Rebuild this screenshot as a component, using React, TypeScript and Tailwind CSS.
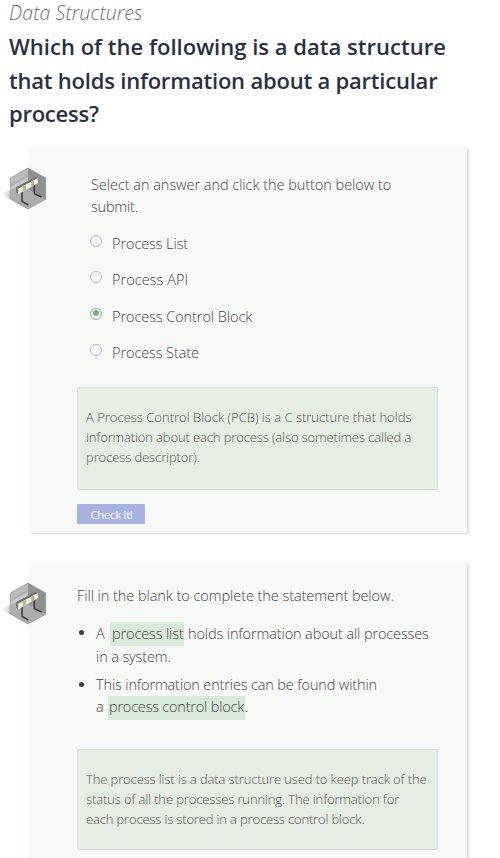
import type { ReactNode } from "react";

function BarrierIcon() {
  return (
    <svg viewBox="0 0 180 180" className="absolute -left-[29px] top-[13px] h-[60px] w-[60px]" aria-hidden="true">
      <defs>
        <linearGradient id="cast" gradientUnits="userSpaceOnUse" x1="2" y1="100" x2="50" y2="110">
          <stop offset="0" stopColor="#f4f4f4" stopOpacity="0.3" />
          <stop offset="0.6" stopColor="#c6c6c6" />
          <stop offset="1" stopColor="#a8a8a8" />
        </linearGradient>
      </defs>
      <path d="M2 102 L31 90 L84 120 V146 L60 134 Z" fill="url(#cast)" />
      <path d="M84 24 L137 54 V118 L84 147 L31 116 V54 Z" fill="#ababab" />
      <path d="M84 24 L137 54 V118 L84 88 Z" fill="#919191" />
      <path d="M84 24 V88 L31 116 V54 Z" fill="#b0b0b0" />
      <path d="M31 56 L84 27 V44 L31 73 Z" fill="#bbbbbb" />
      <path d="M31 81 L84 52 V62 L31 91 Z" fill="#cccccc" />
      <path d="M31 116 L84 88 L137 118 L84 147 Z" fill="#acacac" />
      <path d="M84 24 L137 54 V118 L84 147 L31 116 V54 Z" fill="none" stroke="#9c9c9c" strokeWidth="2" />
      <path d="M66 94 V124 L85 135" fill="none" stroke="#393939" strokeWidth="4.5" />
      <path d="M103 72 V101 L125 111" fill="none" stroke="#393939" strokeWidth="4.5" />
      <path d="M48 82 L55 86 V102 L48 98 Z" fill="#777777" />
      <path d="M48 82 L106 51 L113 55 L55 86 Z" fill="#707070" />
      <path d="M55 86 L113 54 V70 L55 103 Z" fill="#f5f5f2" />
      <path d="M68 79 L78 74 V90 L68 95 Z" fill="#b5b97c" />
      <path d="M94 65 L103 60 V76 L94 81 Z" fill="#b5b97c" />
      <path d="M61 83 V99 M86 70 V85" stroke="#d4d4cf" strokeWidth="2" />
    </svg>
  );
}

function Card({ className, children }: { className: string; children: ReactNode }) {
  return (
    <section
      className={`relative ml-[29px] w-[438px] rounded-[3px] bg-[#f7f9f7] pl-[48px] pr-[29px] shadow-[2px_1px_3px_rgba(0,0,0,0.16)] ${className}`}
    >
      <BarrierIcon />
      {children}
    </section>
  );
}

function Explanation({ className, children }: { className: string; children: ReactNode }) {
  return (
    <div
      className={`rounded-[2px] border border-[#d3dcd2] bg-[#e6eee4] pl-2 text-[13px] leading-5 text-[#555551] ${className}`}
    >
      {children}
    </div>
  );
}

function Line({ className = "", children }: { className?: string; children: ReactNode }) {
  return <span className={`block whitespace-nowrap ${className}`}>{children}</span>;
}

function Blank({ className, children }: { className: string; children: ReactNode }) {
  return <span className={`inline-block h-6 rounded-[1px] bg-[#d8ead8] ${className}`}>{children}</span>;
}

const options = [
  { label: "Process List", tracking: "tracking-[-0.08px]" },
  { label: "Process API", tracking: "tracking-[0.05px]" },
  { label: "Process Control Block", tracking: "tracking-[-0.07px]", checked: true },
  { label: "Process State", tracking: "tracking-[-0.08px]" },
];

export default function App() {
  return (
    <main className="h-[858px] w-[500px] overflow-hidden bg-white font-['Open_Sans',sans-serif] text-[14.5px] font-light leading-[22px] text-[#484548]">
      <p className="pl-[9px] text-[19.5px] italic leading-[25px] tracking-[0.12px] text-[#707070]">Data Structures</p>
      <h1 className="mt-[5px] pl-[9px] text-[22px] font-semibold leading-[33.5px] text-[#293044]">
        <Line className="tracking-[0.02px]">Which of the following is a data structure</Line>
        <Line className="tracking-[-0.21px]">that holds information about a particular</Line>
        <Line className="tracking-[-0.25px]">process?</Line>
      </h1>

      <Card className="mt-[16.5px] h-[386px] pt-[27px]">
        <p className="pl-[14px]">
          <Line className="tracking-[-0.04px]">Select an answer and click the button below to</Line>
          <Line className="tracking-[-0.2px]">submit.</Line>
        </p>
        <div className="mt-[8px] pl-[13px]">
          {options.map((o) => (
            <label key={o.label} className="flex h-[36.25px] items-center gap-[10px]">
              <span
                className={`mb-[6px] flex h-3 w-3 items-center justify-center rounded-full border ${
                  o.checked ? "border-[#83b586]" : "border-[#b5b5cb]"
                }`}
              >
                {o.checked && <span className="mb-px mr-px h-[6px] w-[6px] rounded-full bg-[#7db080]" />}
              </span>
              <span className={o.tracking}>{o.label}</span>
            </label>
          ))}
        </div>
        <Explanation className="mt-[16px] h-[103px] pt-[19px]">
          <Line>A Process Control Block (PCB) is a C structure that holds</Line>
          <Line className="tracking-[-0.12px]">information about each process (also sometimes called a</Line>
          <Line className="tracking-[-0.1px]">process descriptor).</Line>
        </Explanation>
        <button className="mt-[14px] block h-5 w-[68px] rounded-[1px] bg-[#a6b3e0] pl-px pt-[2px] text-[11.5px] font-normal leading-[18px] tracking-[-0.4px] text-white">
          Check It!
        </button>
      </Card>

      <Card className="mt-[29px] h-[320px] pt-[22.5px]">
        <Line className="tracking-[-0.06px]">Fill in the blank to complete the statement below.</Line>
        <ul className="mt-[15px]">
          <li className="flex gap-[12px] leading-[23px]">
            <span className="ml-[2px] mt-[8px] h-[5px] w-[5px] shrink-0 rounded-full bg-[#3c3a3c]" />
            <span>
              <Line className="flex h-[23px] tracking-[-0.12px]">
                <span className="w-[14px]">A</span>
                <Blank className="w-[74px] pl-[2px]">process list</Blank>
                <span className="pl-[4px]">holds information about all processes</span>
              </Line>
              <Line className="tracking-[-0.12px]">in a system.</Line>
            </span>
          </li>
          <li className="mt-[6px] flex gap-[12px]">
            <span className="ml-[2px] mt-[8px] h-[5px] w-[5px] shrink-0 rounded-full bg-[#3c3a3c]" />
            <span>
              <Line className="tracking-[-0.14px]">This information entries can be found within</Line>
              <Line className="flex">
                <span className="w-[12px]">a</span>
                <Blank className="w-[137px] pl-px tracking-[-0.2px]">process control block</Blank>.
              </Line>
            </span>
          </li>
        </ul>
        <Explanation className="mt-[29.5px] h-[101px] pt-[18.5px]">
          <Line className="tracking-[-0.12px]">The process list is a data structure used to keep track of the</Line>
          <Line className="tracking-[-0.12px]">status of all the processes running. The information for</Line>
          <Line className="tracking-[-0.16px]">each process is stored in a process control block.</Line>
        </Explanation>
      </Card>
    </main>
  );
}
